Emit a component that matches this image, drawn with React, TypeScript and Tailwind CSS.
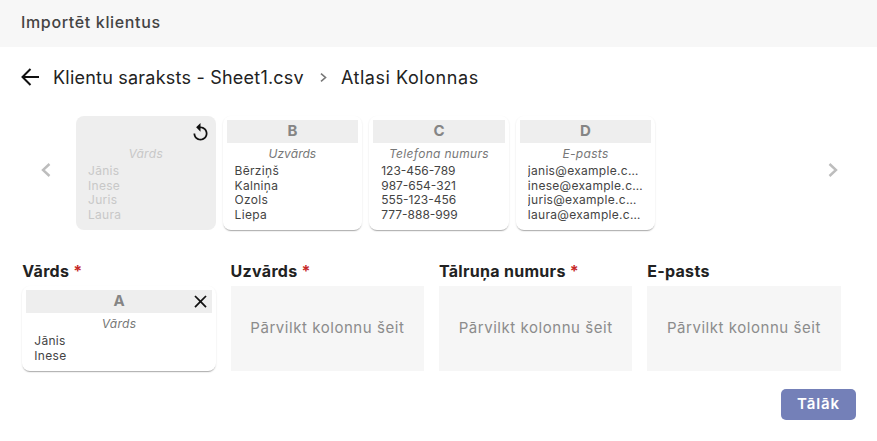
import React from "react";

const columns = [
  { letter: "B", title: "Uzvārds", rows: ["Bērziņš", "Kalniņa", "Ozols", "Liepa"], track: "tracking-[0.3px]", titleTrack: "tracking-[0px]" },
  { letter: "C", title: "Telefona numurs", rows: ["123-456-789", "987-654-321", "555-123-456", "777-888-999"], track: "tracking-[0px]", titleTrack: "tracking-[0.3px]" },
  { letter: "D", title: "E-pasts", rows: ["janis@example.com", "inese@example.com", "juris@example.com", "laura@example.com"], track: "tracking-[0.3px]", titleTrack: "tracking-[0.3px]" },
];

function Chevron({ dir, className }: { dir: "left" | "right"; className: string }) {
  return (
    <svg width="10" height="14" viewBox="0 0 10 14" fill="none" stroke="currentColor" strokeWidth="2.4" className={className}>
      <path d={dir === "left" ? "M8.5 1L2 7l6.5 6" : "M1.5 1L8 7l-6.5 6"} />
    </svg>
  );
}

function ReplayIcon({ className }: { className: string }) {
  return (
    <svg width="21" height="21" viewBox="0 0 24 24" fill="currentColor" className={className}>
      <path d="M12 5V1L7 6l5 5V7c3.31 0 6 2.69 6 6s-2.69 6-6 6-6-2.69-6-6H4c0 4.42 3.58 8 8 8s8-3.58 8-8-3.58-8-8-8z" />
    </svg>
  );
}

function CloseIcon({ className }: { className: string }) {
  return (
    <svg width="21" height="21" viewBox="0 0 24 24" fill="currentColor" className={className}>
      <path d="M19 6.41 17.59 5 12 10.59 6.41 5 5 6.41 10.59 12 5 17.59 6.41 19 12 13.41 17.59 19 19 17.59 13.41 12z" />
    </svg>
  );
}

function ColumnCard({
  letter,
  title,
  rows,
  track,
  titleTrack,
  className,
  closable,
}: {
  letter: string;
  title: string;
  rows: string[];
  track: string;
  titleTrack: string;
  className: string;
  closable?: boolean;
}) {
  return (
    <div className={"rounded-[8px] bg-white px-[4px] pt-[4px] shadow-[0_2px_1px_-1px_rgba(0,0,0,0.25),0_1px_2px_0_rgba(0,0,0,0.12)] " + className}>
      <div className="relative flex h-[23px] items-center justify-center bg-[#eeeeee] text-[15px] font-bold text-[#858585]">
        {letter}
        {closable && <CloseIcon className="absolute right-[0.5px] top-[1px] text-[#111111]" />}
      </div>
      <div className={"mt-[3px] text-center text-[12px] leading-[15px] italic text-[#777777] " + titleTrack}>{title}</div>
      <div className={"mt-[3px] px-[8px] text-[12px] leading-[14.6px] text-[#444444] " + track}>
        {rows.map((r) => (
          <div key={r} className="truncate">{r}</div>
        ))}
      </div>
    </div>
  );
}

function DropBox() {
  return (
    <div className="flex h-[85px] items-center justify-center bg-[#f6f6f6] text-[15px] text-[#8c8c8c] tracking-[0.55px]">
      Pārvilkt kolonnu šeit
    </div>
  );
}

function Label({ text, req }: { text: string; req?: boolean }) {
  return (
    <div className="mb-[3px] h-[23px] text-[16px] leading-[23px] font-bold text-[#222222] tracking-[0.3px]">
      {text}
      {req && <span className="text-[#c62828]"> *</span>}
    </div>
  );
}

export default function App() {
  return (
    <div className="h-[441px] w-[877px] overflow-hidden bg-white font-['Inter','Liberation_Sans',sans-serif]">
      <div className="flex h-[47px] items-center bg-[#f7f7f7] pb-[3px] pl-[21px] text-[16px] font-medium text-[#444444] tracking-[0.65px]">
        Importēt klientus
      </div>

      <div className="mt-[18px] flex h-[24px] items-center pl-[20.5px] text-[18px] text-[#222222]">
        <svg width="18" height="18" viewBox="0 0 18 18" fill="none" stroke="#111111" strokeWidth="2" className="shrink-0">
          <path d="M18 9H1.5M9.5 1L1.5 9l8 8" />
        </svg>
        <span className="ml-[14.5px] tracking-[0.22px]">Klientu saraksts - Sheet1.csv</span>
        <svg width="7" height="9" viewBox="0 0 7 9" fill="none" stroke="#777777" strokeWidth="1.6" className="ml-[16px] shrink-0">
          <path d="M1 0.7L5.5 4.5 1 8.3" />
        </svg>
        <span className="ml-[14px] tracking-[0.55px]">Atlasi Kolonnas</span>
      </div>

      <div className="mt-[27px] flex h-[114px] items-center pl-[40.5px]">
        <Chevron dir="left" className="mb-[6px] shrink-0 text-[#bdbdbd]" />
        <div className="ml-[25.5px] flex gap-[7.1px]">
          <div className="relative h-[114px] w-[139.5px] rounded-[8px] bg-[#eeeeee] px-[12px] pt-[30px] text-[#c8c8c8]">
            <ReplayIcon className="absolute right-[5px] top-[6px] text-[#111111]" />
            <div className="text-center text-[12px] leading-[15px] italic tracking-[0.3px]">Vārds</div>
            <div className="mt-[3px] text-[12px] leading-[14.6px] tracking-[0.3px]">
              <div>Jānis</div>
              <div>Inese</div>
              <div>Juris</div>
              <div>Laura</div>
            </div>
          </div>
          {columns.map((c) => (
            <ColumnCard key={c.letter} {...c} className="h-[114px] w-[139.5px]" />
          ))}
        </div>
        <Chevron dir="right" className="mb-[6px] ml-[172.5px] shrink-0 text-[#bdbdbd]" />
      </div>

      <div className="mt-[30px] grid grid-cols-[193.5px_193.5px_193.5px_193.5px] gap-x-[14.8px] pl-[22.3px]">
        <div>
          <Label text="Vārds" req />
          <ColumnCard
            letter="A"
            title="Vārds"
            rows={["Jānis", "Inese"]}
            track="tracking-[0.3px]"
            titleTrack="tracking-[0.3px]"
            closable
            className="h-[85px]"
          />
        </div>
        <div>
          <Label text="Uzvārds" req />
          <DropBox />
        </div>
        <div>
          <Label text="Tālruņa numurs" req />
          <DropBox />
        </div>
        <div>
          <Label text="E-pasts" />
          <DropBox />
        </div>
      </div>

      <div className="mt-[18px] flex justify-end pr-[21px]">
        <div className="flex h-[31px] w-[75px] items-center justify-center rounded-[5px] bg-[#7480b8] text-[15px] font-semibold text-white tracking-[0.9px]">
          Tālāk
        </div>
      </div>
    </div>
  );
}
